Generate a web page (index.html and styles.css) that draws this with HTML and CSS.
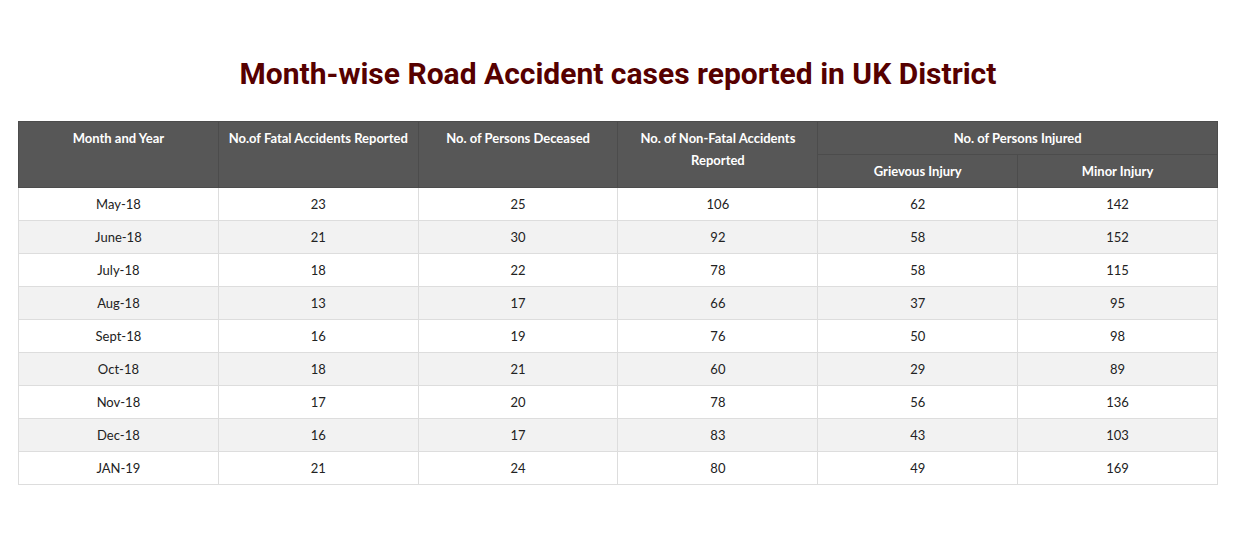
FILE: index.html
```html
<!DOCTYPE html>
<html>
<head>
<meta charset="utf-8">
<link rel="stylesheet" href="styles.css">
</head>
<body>
<div class="wrap">
  <h1 class="title">Month-wise Road Accident cases reported in UK District</h1>
  <table class="data">
    <thead>
      <tr>
        <th rowspan="2">Month and Year</th>
        <th rowspan="2">No.of Fatal Accidents Reported</th>
        <th rowspan="2">No. of Persons Deceased</th>
        <th rowspan="2">No. of Non-Fatal Accidents Reported</th>
        <th colspan="2">No. of Persons Injured</th>
      </tr>
      <tr>
        <th class="sub">Grievous Injury</th>
        <th class="sub">Minor Injury</th>
      </tr>
    </thead>
    <tbody>
      <tr><td>May-18</td><td>23</td><td>25</td><td>106</td><td>62</td><td>142</td></tr>
      <tr><td>June-18</td><td>21</td><td>30</td><td>92</td><td>58</td><td>152</td></tr>
      <tr><td>July-18</td><td>18</td><td>22</td><td>78</td><td>58</td><td>115</td></tr>
      <tr><td>Aug-18</td><td>13</td><td>17</td><td>66</td><td>37</td><td>95</td></tr>
      <tr><td>Sept-18</td><td>16</td><td>19</td><td>76</td><td>50</td><td>98</td></tr>
      <tr><td>Oct-18</td><td>18</td><td>21</td><td>60</td><td>29</td><td>89</td></tr>
      <tr><td>Nov-18</td><td>17</td><td>20</td><td>78</td><td>56</td><td>136</td></tr>
      <tr><td>Dec-18</td><td>16</td><td>17</td><td>83</td><td>43</td><td>103</td></tr>
      <tr><td>JAN-19</td><td>21</td><td>24</td><td>80</td><td>49</td><td>169</td></tr>
    </tbody>
  </table>
</div>
</body>
</html>
```
FILE: styles.css
```css
html, body {
  margin: 0;
  padding: 0;
  background: #fff;
}
.wrap {
  width: 1200px;
  margin-left: 18px;
  padding-top: 56px;
}
.title {
  margin: 0 0 29px 0;
  text-align: center;
  font-family: Roboto, "Liberation Sans", sans-serif;
  font-weight: 700;
  font-size: 30px;
  line-height: 36px;
  color: #560000;
}
.data {
  width: 1200px;
  border-collapse: collapse;
  table-layout: fixed;
  font-family: Lato, "Liberation Sans", sans-serif;
  font-size: 13px;
  color: #222;
  border: 1px solid #ddd;
}
.data th {
  background: #575757;
  color: #fff;
  font-weight: 700;
  line-height: 22px;
  padding: 5px 8px 5px 8px;
  height: 22px;
  vertical-align: top;
  text-align: center;
  border: 1px solid #4c4c4c;
}
.data th.sub {
  vertical-align: middle;
}
.data td {
  text-align: center;
  line-height: 22px;
  height: 22px;
  padding: 5px 8px;
  border: 1px solid #ddd;
}
.data tbody tr:nth-child(even) td {
  background: #f2f2f2;
}
```
